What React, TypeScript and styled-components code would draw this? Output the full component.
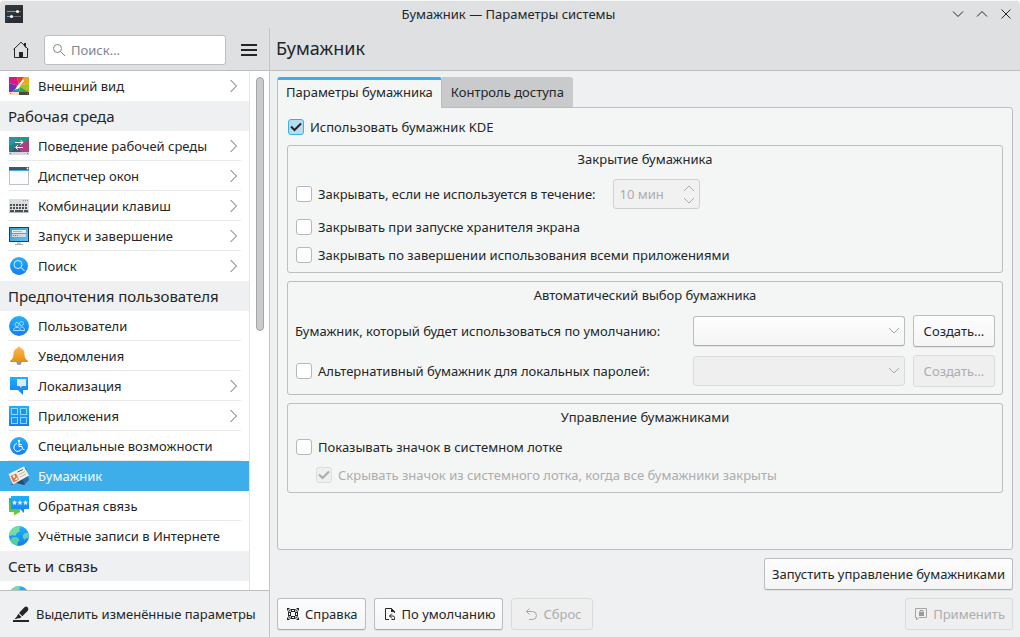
import React, { useState } from "react";
import styled, { createGlobalStyle, css } from "styled-components";

const color = {
  header: "#dee0e2",
  window: "#eff0f1",
  panel: "#f4f6f5",
  view: "#ffffff",
  text: "#232629",
  disabled: "#abadae",
  border: "#bcbebf",
  accent: "#3daee9",
};

const GlobalStyle = createGlobalStyle`
  *, *::before, *::after { box-sizing: border-box; }
  body {
    margin: 0;
    background: #ffffff;
    color: ${color.text};
    font-family: "Noto Sans", sans-serif;
    font-size: 13px;
    line-height: 18px;
  }
  button, input, select { font: inherit; color: inherit; margin: 0; }
  svg { display: block; flex: none; }
`;

/* ---------- Window frame ---------- */

const Window = styled.div`
  display: flex;
  flex-direction: column;
  height: 100vh;
  background: ${color.window};
  border-radius: 5px 5px 0 0;
  overflow: hidden;
`;

const TitleBar = styled.header`
  display: grid;
  grid-template-columns: 1fr auto 1fr;
  align-items: center;
  height: 28px;
  flex: none;
  padding: 0 8px 1px 5px;
  background: ${color.header};
  border-top: 1px solid #f6f7f7;
`;

const WindowTitle = styled.div`
  text-align: center;
`;

const WindowButtons = styled.div`
  display: flex;
  justify-content: flex-end;
  gap: 12px;
`;

const FlatButton = styled.button`
  display: flex;
  align-items: center;
  justify-content: center;
  padding: 0;
  border: 0;
  background: none;
`;

const Body = styled.div`
  display: flex;
  flex: 1;
  min-height: 0;
`;

/* ---------- Sidebar ---------- */

const Sidebar = styled.aside`
  display: flex;
  flex-direction: column;
  width: 270px;
  flex: none;
  border-right: 1px solid #c2c4c6;
`;

const Toolbar = styled.div`
  display: flex;
  align-items: center;
  height: 43px;
  flex: none;
  padding: 2px 12px 0 13px;
  background: ${color.header};
  border-bottom: 1px solid ${color.border};
`;

const SearchBox = styled.label`
  display: flex;
  align-items: center;
  gap: 5px;
  flex: 1;
  min-width: 0;
  height: 30px;
  margin: 0 15px;
  padding: 0 7px;
  background: ${color.view};
  border: 1px solid ${color.border};
  border-radius: 3px;
`;

const SearchInput = styled.input`
  flex: 1;
  min-width: 0;
  padding: 0;
  border: 0;
  outline: 0;
  background: none;
  &::placeholder { color: #7b868f; opacity: 1; }
`;

const ListArea = styled.div`
  display: flex;
  flex: 1;
  min-height: 0;
  background: ${color.view};
`;

const CategoryList = styled.nav`
  flex: 1;
  min-width: 0;
  overflow: hidden;
  border-right: 1px solid #e4e5e6;
`;

const ScrollTrack = styled.div`
  width: 19px;
  padding: 6px 5px 6px 6px;
`;

const ScrollThumb = styled.div`
  width: 8px;
  height: 50%;
  background: #c9cacb;
  border: 1px solid #a4a5a6;
  border-radius: 4px;
`;

const SectionTitle = styled.h2`
  margin: 0;
  padding: 0 8px;
  height: 30px;
  font-size: 15px;
  font-weight: 400;
  line-height: 30px;
  background: ${color.window};
`;

const CategoryRow = styled.button<{ $selected?: boolean }>`
  display: block;
  width: 100%;
  height: 30px;
  padding: 0 8px;
  border: 0;
  text-align: left;
  background: ${(p) => (p.$selected ? color.accent : "transparent")};
  color: ${(p) => (p.$selected ? "#fcfcfc" : color.text)};
`;

const RowContent = styled.span<{ $line?: boolean }>`
  display: flex;
  align-items: center;
  gap: 8px;
  height: 30px;
  ${(p) => p.$line && css`box-shadow: inset 0 -1px 0 #e9eaea;`}
`;

const RowLabel = styled.span`
  flex: 1;
  white-space: nowrap;
`;

const HighlightButton = styled(FlatButton)`
  justify-content: flex-start;
  gap: 7px;
  height: 47px;
  flex: none;
  padding: 0 0 0 13px;
  border-top: 1px solid ${color.border};
  background: ${color.window};
  white-space: nowrap;
`;

/* ---------- Main area ---------- */

const Main = styled.main`
  display: flex;
  flex-direction: column;
  flex: 1;
  min-width: 0;
`;

const PageHeader = styled.div`
  height: 43px;
  flex: none;
  padding: 0 6px;
  background: ${color.header};
  border-bottom: 1px solid ${color.border};
`;

const PageTitle = styled.h1`
  margin: 0;
  font-size: 18px;
  font-weight: 400;
  line-height: 40px;
`;

const Content = styled.div`
  display: flex;
  flex-direction: column;
  flex: 1;
  min-height: 0;
  padding: 6px 7px 7px;
`;

const TabList = styled.div`
  display: flex;
  align-items: flex-start;
  height: 30px;
  flex: none;
`;

const Tab = styled.button<{ $active: boolean }>`
  border: 0;
  white-space: nowrap;
  ${(p) =>
    p.$active
      ? css`
          height: 31px;
          padding: 0 8px 4px;
          background: ${color.panel};
          border-top: 3px solid ${color.accent};
          border-left: 1px solid ${color.border};
          border-right: 1px solid ${color.border};
          border-radius: 3px 3px 0 0;
          z-index: 1;
        `
      : css`
          height: 30px;
          padding: 0 9px;
          background: #c9cacc;
          border-radius: 0 3px 0 0;
        `}
`;

const Panel = styled.section`
  display: flex;
  flex-direction: column;
  gap: 8px;
  flex: 1;
  padding: 9px;
  background: ${color.panel};
  border: 1px solid ${color.border};
  border-radius: 0 3px 3px 3px;
`;

const Group = styled.section`
  padding: 4px 7px 7px;
  border: 1px solid ${color.border};
  border-radius: 3px;
`;

const GroupTitle = styled.h3`
  margin: 0 0 11px;
  font-size: 13px;
  font-weight: 400;
  text-align: center;
`;

const Stack = styled.div`
  display: flex;
  flex-direction: column;
  gap: 8px;
`;

const Line = styled.div`
  display: flex;
  align-items: center;
  gap: 17px;
`;

const FormRow = styled.div`
  display: grid;
  grid-template-columns: 390px 1fr auto;
  gap: 8px;
  align-items: center;
`;

const CheckLabel = styled.label<{ $indent?: boolean; $disabled?: boolean }>`
  display: flex;
  align-items: center;
  gap: 6px;
  height: 20px;
  padding-left: ${(p) => (p.$indent ? 21 : 1)}px;
  white-space: nowrap;
  color: ${(p) => (p.$disabled ? color.disabled : color.text)};
`;

const CheckFrame = styled.span`
  display: grid;
  > * { grid-area: 1 / 1; }
  > svg { pointer-events: none; }
`;

const CheckInput = styled.input`
  appearance: none;
  width: 16px;
  height: 16px;
  background: ${color.view};
  border: 1px solid #b6b8b9;
  border-radius: 3px;
  &:checked { background: #b5dcf1; border-color: ${color.accent}; }
  &:disabled { background: #efefef; border-color: #dcdddd; }
`;

const SpinFrame = styled.div`
  display: flex;
  align-items: center;
  width: 87px;
  height: 30px;
  padding: 0 4px 0 6px;
  background: #f1f1f1;
  border: 1px solid #cfd1d1;
  border-radius: 3px;
`;

const SpinInput = styled.input`
  flex: 1;
  min-width: 0;
  padding: 0;
  border: 0;
  background: none;
  color: ${color.disabled};
`;

const SpinButtons = styled.div`
  display: flex;
  flex-direction: column;
  gap: 5px;
`;

const SelectFrame = styled.div`
  display: grid;
  align-items: center;
  > * { grid-area: 1 / 1; }
  > svg { justify-self: end; margin-right: 5px; pointer-events: none; }
`;

const raised = css`
  background: linear-gradient(#fdfdfd, #f5f5f5);
  border: 1px solid #bbbdbe;
  border-bottom-color: #a9abac;
  border-radius: 3px;
  box-shadow: 0 1px 0 rgba(0, 0, 0, 0.06);
  &:disabled {
    background: #efefef;
    border-color: #dadbdb;
    color: ${color.disabled};
    box-shadow: none;
    opacity: 1;
  }
`;

const Select = styled.select`
  appearance: none;
  width: 100%;
  height: 30px;
  padding: 0 24px 0 8px;
  ${raised}
`;

const PushButton = styled.button`
  display: inline-flex;
  align-items: center;
  justify-content: center;
  gap: 4px;
  height: 32px;
  min-width: 82px;
  padding: 0 7px;
  white-space: nowrap;
  ${raised}
`;

const LaunchRow = styled.div`
  display: flex;
  justify-content: flex-end;
  margin: 8px 0;
`;

const Footer = styled.footer`
  display: flex;
  gap: 8px;
`;

const Spacer = styled.div`
  flex: 1;
`;

/* ---------- Small glyphs ---------- */

type LineIconProps = { d: string; w?: number; h?: number; stroke?: string; width?: number };

const LineIcon = ({ d, w = 12, h = 12, stroke = color.text, width = 1 }: LineIconProps) => (
  <svg width={w} height={h} viewBox={`0 0 ${w} ${h}`} fill="none" stroke={stroke} strokeWidth={width} aria-hidden="true">
    <path d={d} />
  </svg>
);

const AppIcon = () => (
  <svg width="18" height="18" viewBox="0 0 18 18" aria-hidden="true">
    <rect width="18" height="18" rx="1" fill="#31363b" />
    <path d="M0 18L18 0V18z" fill="#2a2e32" />
    <path d="M2 6.5H12" stroke="#3daee9" />
    <path d="M13 6.5H16M7 11.5H16" stroke="#6a7075" />
    <path d="M2 11.5H6" stroke="#3daee9" />
    <circle cx="12.5" cy="6.5" r="1.5" fill="#fff" />
    <circle cx="6.5" cy="11.5" r="1.5" fill="#fff" />
  </svg>
);

const HomeIcon = () => (
  <svg width="16" height="18" viewBox="0 0 16 18" aria-hidden="true">
    <path d="M0.5 8.5L8 1.2L15.5 8.5M1.5 8V16.5H14.5V8" fill="none" stroke={color.text} />
    <path d="M11 2h2v5l-2-2z" fill={color.text} />
    <rect x="6" y="11" width="4" height="6" fill={color.text} />
  </svg>
);

const PenIcon = () => (
  <svg width="16" height="16" viewBox="0 0 16 16" fill={color.text} aria-hidden="true">
    <rect y="14" width="16" height="2" />
    <path d="M14.6 1.2c-.8-1-2.2-1-3.2 0L6 7l3.4 3.3L15 4.4c.5-1 .4-2.3-.4-3.2z" />
    <path d="M5.3 7.8l3.2 3.2-1.7 1.2H4.6L3.4 13H1.6l1.9-2.1z" />
  </svg>
);

const HelpIcon = () => (
  <svg width="16" height="16" viewBox="0 0 16 16" fill="none" stroke={color.text} aria-hidden="true">
    <rect x="3.5" y="3.5" width="9" height="9" rx="3" />
    <rect x="5.5" y="5.5" width="5" height="5" rx="1" />
    <path d="M6.5 3V6M9.5 3V6M6.5 10V13M9.5 10V13M3 6.5H6M3 9.5H6M10 6.5H13M10 9.5H13" />
    <path d="M2 2h3L2 5zM14 2v3L11 2zM2 14v-3L5 14zM14 14h-3L14 11z" fill={color.text} stroke="none" />
  </svg>
);

const DefaultsIcon = () => (
  <svg width="16" height="16" viewBox="0 0 16 16" fill="none" stroke={color.text} aria-hidden="true">
    <path d="M7 13.5H3.5V2.5H9.5L12.5 5.5V7" />
    <path d="M9 2v4h4z" fill={color.text} stroke="none" />
    <path d="M10 7.5L7.5 10L10 12.5M7.5 10H11Q12.500 10 12.500 11.500V13.500H9.500" />
  </svg>
);

const UndoIcon = () => (
  <LineIcon w={16} h={16} stroke="#a3a5a6" d="M6.500 2.500L3.500 5.500L6.500 8.500M3.500 5.500H9.500A4 4 0 0 1 9.500 13.500H6" />
);

const ApplyIcon = () => (
  <svg width="16" height="16" viewBox="0 0 16 16" aria-hidden="true">
    <path d="M4 11.5H2.5V2.5H13.5V11.5H6L3.5 14V11.5" fill="none" stroke="#a3a5a6" />
    <rect x="6" y="6" width="5" height="4" fill="#999b9c" />
    <path d="M7 6V4.5h3V6" fill="none" stroke="#999b9c" />
  </svg>
);

const RightArrow = () => <LineIcon w={12} h={14} stroke="#65686b" d="M1.500 1L7.500 7L1.500 13" />;

/* ---------- Category icons ---------- */

const Gradients = () => (
  <svg width="0" height="0" style={{ position: "absolute" }} aria-hidden="true">
    <defs>
      <linearGradient id="blue" x1="0" y1="0" x2="0" y2="1">
        <stop offset="0" stopColor="#1eb2fb" />
        <stop offset="1" stopColor="#197cf1" />
      </linearGradient>
      <linearGradient id="amber" x1="0" y1="0" x2="0" y2="1">
        <stop offset="0" stopColor="#fdb54b" />
        <stop offset="1" stopColor="#e0920e" />
      </linearGradient>
      <linearGradient id="screen" x1="0" y1="0" x2="1" y2="1">
        <stop offset="0" stopColor="#3a9bd4" />
        <stop offset="1" stopColor="#5ec1f7" />
      </linearGradient>
      <linearGradient id="green" x1="0" y1="0" x2="0" y2="1">
        <stop offset="0" stopColor="#1fb78a" />
        <stop offset="1" stopColor="#7bd01a" />
      </linearGradient>
    </defs>
  </svg>
);

const Globe = () => (
  <>
    <circle cx="11" cy="11" r="10" fill="url(#blue)" />
    <path d="M3 5C5 2.500 8 1 11 1L12.500 3L11 4L12 6L9 8L7 11L5 10L2 11L1.200 9C1.500 7.500 2 6 3 5z" fill="#74dca4" />
    <path d="M5 12l4 0 3 3-2 2-1 3.500C5 19.500 3 17.500 2 14.500z" fill="#56cfa0" />
    <path d="M15 10l2-2 3 0q1 2.500 .2 5L18 13l-1 2-2-2z" fill="#66d6a0" />
  </>
);

const art: Record<string, React.ReactNode> = {
  appearance: (
    <>
      <path d="M1 2H9L11 11L1 8z" fill="#d8178b" />
      <path d="M9 2H16L11 11z" fill="#ee3a31" />
      <path d="M16 2H21V8L11 11z" fill="#f3a51d" />
      <path d="M21 8V17L11 11z" fill="#a9c01f" />
      <path d="M21 17H12L11 11z" fill="#39a845" />
      <path d="M12 17H4L11 11z" fill="#208db0" />
      <path d="M4 17H1V8L11 11z" fill="#6f35a8" />
      <rect x="1" y="17" width="10" height="3" fill="#f9dfc0" />
      <rect x="11" y="17" width="10" height="3" fill="#4f473c" />
      <path d="M2 18h1v1H2zM19 18h1v1h-1z" fill="#9a7a55" />
      <path d="M15 5.500L11 10.500" stroke="#fff" strokeWidth="2" strokeLinecap="round" />
      <path d="M10.500 9.500l1.700 1.600C11.500 14 9 14.500 7 14.500C8.500 13.500 8.300 11 10.500 9.500z" fill="#fff" />
    </>
  ),
  workspace: (
    <>
      <rect x="1" y="2" width="20" height="16" fill="#25807f" />
      <path d="M1 2H12L7 8L1 11z" fill="#2b93a1" />
      <path d="M12 2H21V5L14 9L7 8z" fill="#1d9c85" />
      <path d="M21 4V18H12L9 12z" fill="#a9427d" />
      <path d="M1 18L9 11L14 18z" fill="#39597d" />
      <rect x="1" y="17" width="20" height="3" fill="#d3d6d8" />
      <path d="M2 18h1v1H2zM19 18h1v1h-1z" fill="#6f7377" />
      <path d="M7 7.500H15M12.500 5L15 7.500L12.500 9.500M15 12.500H8M10 10L7.500 12.500L10 14.500" fill="none" stroke="#fff" />
    </>
  ),
  windows: (
    <>
      <rect x="1.500" y="2.500" width="19" height="17" fill="#fcfcfc" stroke="#bcc4c8" />
      <rect x="1" y="2" width="20" height="3" fill="#475461" />
      <rect x="1" y="5" width="20" height="1" fill="#3daee9" />
      <circle cx="19.500" cy="3.500" r="1" fill="#e8ecee" />
    </>
  ),
  keyboard: (
    <>
      <rect x="1" y="4" width="20" height="14" fill="#d9dee0" />
      <rect x="1" y="17" width="20" height="1" fill="#aeb6b9" />
      <path d="M2 10H20M2 13H20" stroke="#4a5055" strokeWidth="2" strokeDasharray="2 1" />
      <path d="M2 16H6M7 16H15M16 16H20" stroke="#4a5055" strokeWidth="2" />
      <path d="M15 5.500H20" stroke="#2ecc71" strokeDasharray="1 1" />
    </>
  ),
  startup: (
    <>
      <rect x="1" y="2" width="20" height="15" fill="#33393e" />
      <rect x="2" y="3" width="18" height="13" fill="url(#screen)" />
      <rect x="4" y="5" width="14" height="3" fill="#e6ebee" />
      <rect x="4" y="9" width="14" height="3" fill="#d2dadf" />
      <path d="M4 8.500H18" stroke="#7f98a6" />
      <path d="M5 10.500h1M7 10.500h1M9 10.500h1" stroke="#6a757c" />
      <path d="M5 6.500h9" stroke="#a9b3b9" />
      <path d="M9 17h4v2H9z" fill="#c8ced1" />
      <path d="M7 19.500H15" stroke="#a5adb1" />
    </>
  ),
  search: (
    <>
      <circle cx="11" cy="11" r="9" fill="url(#blue)" />
      <circle cx="10" cy="9.500" r="4" fill="none" stroke="#d9f1fe" />
      <path d="M13 12.500L16.500 16" stroke="#fff" strokeWidth="1" />
    </>
  ),
  users: (
    <>
      <circle cx="11" cy="11" r="10" fill="url(#blue)" />
      <g fill="none" stroke="#a6dcfd">
        <circle cx="9" cy="9.500" r="2" />
        <circle cx="13.500" cy="8.500" r="2" />
        <path d="M5.500 15.500C5.500 13 7 12.500 9 12.500S12.500 13 12.500 15.500zM12 12.500C13 11.500 16.500 11.500 16.500 15.500H13" />
      </g>
    </>
  ),
  bell: (
    <>
      <circle cx="11" cy="17.500" r="2.500" fill="#8e98a5" />
      <circle cx="11" cy="3" r="1.500" fill="#fcb347" />
      <path d="M11 3C6.500 3 5.500 6 5.500 9.500C5.500 13 4 14.500 2 16V17H20V16C18 14.500 16.500 13 16.500 9.500C16.500 6 15.500 3 11 3z" fill="url(#amber)" />
    </>
  ),
  locale: (
    <>
      <path d="M2 2H20V15H15V20L10 15H2z" fill="url(#blue)" />
      <path d="M9 4H18V11H14L12 13V11H9z" fill="#dcebf8" />
    </>
  ),
  apps: (
    <>
      <rect x="1" y="1" width="20" height="20" fill="url(#blue)" />
      <g fill="#2492e4" stroke="#84ddff">
        <rect x="3.500" y="3.500" width="6" height="6" />
        <rect x="12.500" y="3.500" width="6" height="6" />
        <rect x="3.500" y="12.500" width="6" height="6" />
        <rect x="12.500" y="12.500" width="6" height="6" />
      </g>
    </>
  ),
  accessibility: (
    <>
      <circle cx="11" cy="11" r="9" fill="url(#blue)" />
      <circle cx="11" cy="6" r="1.200" fill="#fff" />
      <path d="M11 7V11.500H14L15 14.500H16.500M11 9.500H14M9 8.500A4 4 0 1 0 13.500 14" fill="none" stroke="#fff" />
    </>
  ),
  wallet: (
    <>
      <path d="M13 3L18 3L21 15L16 20L10 18z" fill="#31689d" />
      <path d="M8 18L17 20L14 14z" fill="#1e4d7b" />
      <path d="M2 19L7 18L5 20z" fill="#5f4f4b" />
      <path d="M0.500 9L16 1.500L21 10.500L5 19.500z" fill="#f4f0ea" />
      <path d="M2.500 11L8 8.500L11 14.500L5.500 17.500z" fill="#e8702e" />
      <circle cx="6" cy="11.500" r="1.200" fill="#fff" />
      <path d="M6 15.500l3-3.200 1 2z" fill="#fff" />
      <path d="M9.500 7L15 4.500" stroke="#55565a" />
      <path d="M11 9.500L17 6.500M12 12L18 9" stroke="#b9b6b1" />
    </>
  ),
  feedback: (
    <>
      <path d="M1 3H12V17L6 20.500V17H1z" fill="url(#green)" />
      <path d="M3 1H21V14H16V18L12 14H3z" fill="url(#blue)" />
      <path
        d="M6.500 5l.8 1.600 1.700.3-1.200 1.200.3 1.800-1.600-.8-1.600.8.3-1.800L4 6.900l1.700-.3zM12 5l.8 1.600 1.700.3-1.200 1.200.3 1.800-1.600-.8-1.600.8.3-1.800-1.200-1.200 1.700-.3zM17.500 5l.8 1.600 1.700.3-1.200 1.200.3 1.800-1.600-.8-1.600.8.3-1.800L15 6.900l1.700-.3z"
        fill="#d5eefc"
      />
    </>
  ),
  globe: <Globe />,
};

const CategoryIcon = ({ name }: { name: string }) => (
  <svg width="22" height="22" viewBox="0 0 22 22" aria-hidden="true">
    {art[name]}
  </svg>
);

/* ---------- Data ---------- */

type Item = { icon: string; label: string; nested?: boolean };
type Section = { title?: string; items: Item[] };

const sections: Section[] = [
  { items: [{ icon: "appearance", label: "Внешний вид", nested: true }] },
  {
    title: "Рабочая среда",
    items: [
      { icon: "workspace", label: "Поведение рабочей среды", nested: true },
      { icon: "windows", label: "Диспетчер окон", nested: true },
      { icon: "keyboard", label: "Комбинации клавиш", nested: true },
      { icon: "startup", label: "Запуск и завершение", nested: true },
      { icon: "search", label: "Поиск", nested: true },
    ],
  },
  {
    title: "Предпочтения пользователя",
    items: [
      { icon: "users", label: "Пользователи" },
      { icon: "bell", label: "Уведомления" },
      { icon: "locale", label: "Локализация", nested: true },
      { icon: "apps", label: "Приложения", nested: true },
      { icon: "accessibility", label: "Специальные возможности" },
      { icon: "wallet", label: "Бумажник" },
      { icon: "feedback", label: "Обратная связь" },
      { icon: "globe", label: "Учётные записи в Интернете" },
    ],
  },
  { title: "Сеть и связь", items: [{ icon: "globe", label: "" }] },
];

/* ---------- Controls ---------- */

type CheckProps = { label: string; checked?: boolean; disabled?: boolean; indent?: boolean };

const Check = ({ label, checked = false, disabled, indent }: CheckProps) => {
  const [on, setOn] = useState(checked);
  return (
    <CheckLabel $indent={indent} $disabled={disabled}>
      <CheckFrame>
        <CheckInput type="checkbox" checked={on} disabled={disabled} onChange={(e) => setOn(e.target.checked)} />
        {on && <LineIcon w={16} h={16} width={2} stroke={disabled ? "#a9abac" : color.text} d="M3 7.500L6.500 11L13 4.500" />}
      </CheckFrame>
      {label}
    </CheckLabel>
  );
};

const Combo = ({ disabled, ...rest }: { disabled?: boolean; id?: string; "aria-label"?: string }) => (
  <SelectFrame>
    <Select disabled={disabled} {...rest} />
    <LineIcon h={8} stroke="#a3a5a6" d="M1 1L6 6L11 1" />
  </SelectFrame>
);

export default function App() {
  const [tab, setTab] = useState(0);
  const [current, setCurrent] = useState("Бумажник");

  return (
    <Window>
      <GlobalStyle />
      <Gradients />
      <TitleBar>
        <AppIcon />
        <WindowTitle>Бумажник — Параметры системы</WindowTitle>
        <WindowButtons>
          <FlatButton aria-label="Свернуть"><LineIcon d="M1 3.500L6 8.500L11 3.500" /></FlatButton>
          <FlatButton aria-label="Развернуть"><LineIcon d="M1 8.500L6 3.500L11 8.500" /></FlatButton>
          <FlatButton aria-label="Закрыть"><LineIcon d="M1.500 1.500L10.500 10.500M10.500 1.500L1.500 10.500" /></FlatButton>
        </WindowButtons>
      </TitleBar>

      <Body>
        <Sidebar>
          <Toolbar>
            <FlatButton aria-label="Домой"><HomeIcon /></FlatButton>
            <SearchBox>
              <LineIcon w={14} h={14} stroke="#7b868f" d="M9.500 5.500a4 4 0 1 1-8 0a4 4 0 1 1 8 0M8.500 8.500L13 13" />
              <SearchInput type="text" placeholder="Поиск…" aria-label="Поиск" />
            </SearchBox>
            <FlatButton aria-label="Меню"><LineIcon w={16} h={12} width={2} d="M0 1H16M0 6H16M0 11H16" /></FlatButton>
          </Toolbar>

          <ListArea>
            <CategoryList>
              {sections.map((section, s) => (
                <React.Fragment key={s}>
                  {section.title && <SectionTitle>{section.title}</SectionTitle>}
                  {section.items.map((item, i) => (
                    <CategoryRow
                      key={i}
                      $selected={item.label === current}
                      onClick={() => setCurrent(item.label)}
                    >
                      <RowContent $line={i < section.items.length - 1 && item.label !== current}>
                        <CategoryIcon name={item.icon} />
                        <RowLabel>{item.label}</RowLabel>
                        {item.nested && <RightArrow />}
                      </RowContent>
                    </CategoryRow>
                  ))}
                </React.Fragment>
              ))}
            </CategoryList>
            <ScrollTrack>
              <ScrollThumb />
            </ScrollTrack>
          </ListArea>

          <HighlightButton>
            <PenIcon />
            Выделить изменённые параметры
          </HighlightButton>
        </Sidebar>

        <Main>
          <PageHeader>
            <PageTitle>Бумажник</PageTitle>
          </PageHeader>

          <Content>
            <TabList role="tablist">
              {["Параметры бумажника", "Контроль доступа"].map((name, i) => (
                <Tab key={name} role="tab" aria-selected={tab === i} $active={tab === i} onClick={() => setTab(i)}>
                  {name}
                </Tab>
              ))}
            </TabList>

            <Panel role="tabpanel">
              <Check label="Использовать бумажник KDE" checked />

              <Group>
                <GroupTitle>Закрытие бумажника</GroupTitle>
                <Stack>
                  <Line>
                    <Check label="Закрывать, если не используется в течение:" />
                    <SpinFrame>
                      <SpinInput type="text" defaultValue="10 мин" disabled aria-label="Время ожидания" />
                      <SpinButtons>
                        <FlatButton disabled aria-label="Больше"><LineIcon h={7} stroke="#a9abac" d="M1 6L6 1L11 6" /></FlatButton>
                        <FlatButton disabled aria-label="Меньше"><LineIcon h={7} stroke="#a9abac" d="M1 1L6 6L11 1" /></FlatButton>
                      </SpinButtons>
                    </SpinFrame>
                  </Line>
                  <Check label="Закрывать при запуске хранителя экрана" />
                  <Check label="Закрывать по завершении использования всеми приложениями" />
                </Stack>
              </Group>

              <Group>
                <GroupTitle>Автоматический выбор бумажника</GroupTitle>
                <Stack>
                  <FormRow>
                    <label htmlFor="default-wallet">Бумажник, который будет использоваться по умолчанию:</label>
                    <Combo id="default-wallet" />
                    <PushButton>Создать…</PushButton>
                  </FormRow>
                  <FormRow>
                    <Check label="Альтернативный бумажник для локальных паролей:" />
                    <Combo disabled aria-label="Бумажник для локальных паролей" />
                    <PushButton disabled>Создать…</PushButton>
                  </FormRow>
                </Stack>
              </Group>

              <Group>
                <GroupTitle>Управление бумажниками</GroupTitle>
                <Stack>
                  <Check label="Показывать значок в системном лотке" />
                  <Check label="Скрывать значок из системного лотка, когда все бумажники закрыты" checked disabled indent />
                </Stack>
              </Group>
            </Panel>

            <LaunchRow>
              <PushButton>Запустить управление бумажниками</PushButton>
            </LaunchRow>

            <Footer>
              <PushButton><HelpIcon />Справка</PushButton>
              <PushButton><DefaultsIcon />По умолчанию</PushButton>
              <PushButton disabled><UndoIcon />Сброс</PushButton>
              <Spacer />
              <PushButton disabled><ApplyIcon />Применить</PushButton>
            </Footer>
          </Content>
        </Main>
      </Body>
    </Window>
  );
}
